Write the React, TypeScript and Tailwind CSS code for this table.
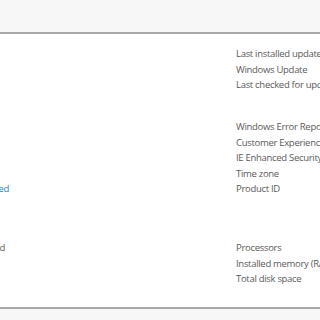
export default function App() {
  const groups = [
    {
      left: null as null | { text: string; blue: boolean; w: string },
      rows: ['Last installed updates', 'Windows Update', 'Last checked for updates'],
    },
    {
      left: { text: 'Not configured', blue: true, w: 'w-[9px]' },
      rows: [
        'Windows Error Reporting',
        'Customer Experience Improvement Program',
        'IE Enhanced Security Configuration',
        'Time zone',
        'Product ID',
      ],
    },
    {
      left: { text: 'Not activated', blue: false, w: 'w-[5px]' },
      rows: ['Processors', 'Installed memory (RAM)', 'Total disk space'],
    },
  ];

  return (
    <div
      className="w-[320px] h-[320px] overflow-hidden bg-white text-[9.5px] tracking-[-0.3px] leading-[15.5px] text-[#5a5a5a] flex flex-col"
      style={{ fontFamily: '"Open Sans", "Noto Sans", sans-serif' }}
    >
      <div className="h-[34px] shrink-0 bg-[#f7f7f7] border-b-2 border-[#a8a8a8]" />

      <div className="flex-1 flex flex-col pt-[12px]">
        {groups.map((g, i) => (
          <div
            key={i}
            className={`flex ${i === 1 ? 'mt-[26.5px]' : ''} ${i === 2 ? 'mt-[43.5px]' : ''}`}
          >
            <div className="w-[236px] shrink-0 flex flex-col">
              {g.rows.map((_, j) => {
                const show = g.left && j === (i === 1 ? 4 : 0);
                return (
                  <div
                    key={j}
                    className={`h-[15.5px] flex justify-end overflow-hidden ${g.left ? g.left.w : 'w-[9px]'}`}
                  >
                    {show && (
                      <span
                        className={`whitespace-nowrap ${g.left!.blue ? 'text-[#1e7fd4]' : ''}`}
                      >
                        {g.left!.text}
                      </span>
                    )}
                  </div>
                );
              })}
            </div>
            <div className="flex flex-col whitespace-nowrap">
              {g.rows.map((r) => (
                <div key={r} className="h-[15.5px]">
                  {r}
                </div>
              ))}
            </div>
          </div>
        ))}
      </div>

      <div className="h-[13px] shrink-0 bg-[#f7f7f7] border-t-2 border-[#a8a8a8]" />
    </div>
  );
}
